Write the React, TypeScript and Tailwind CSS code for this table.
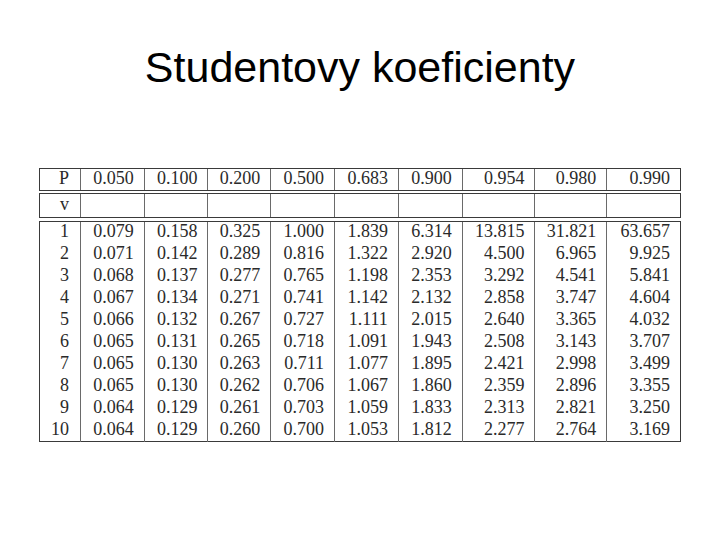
import React from 'react';

const cols = ['w-[40px]', 'w-[64px]', 'w-[64px]', 'w-[63px]', 'w-[64px]', 'w-[64px]', 'w-[64px]', 'w-[73px]', 'w-[72px]', 'w-[74px]'];

const probs = ['0.050', '0.100', '0.200', '0.500', '0.683', '0.900', '0.954', '0.980', '0.990'];

const rows: string[][] = [
  ['1', '0.079', '0.158', '0.325', '1.000', '1.839', '6.314', '13.815', '31.821', '63.657'],
  ['2', '0.071', '0.142', '0.289', '0.816', '1.322', '2.920', '4.500', '6.965', '9.925'],
  ['3', '0.068', '0.137', '0.277', '0.765', '1.198', '2.353', '3.292', '4.541', '5.841'],
  ['4', '0.067', '0.134', '0.271', '0.741', '1.142', '2.132', '2.858', '3.747', '4.604'],
  ['5', '0.066', '0.132', '0.267', '0.727', '1.111', '2.015', '2.640', '3.365', '4.032'],
  ['6', '0.065', '0.131', '0.265', '0.718', '1.091', '1.943', '2.508', '3.143', '3.707'],
  ['7', '0.065', '0.130', '0.263', '0.711', '1.077', '1.895', '2.421', '2.998', '3.499'],
  ['8', '0.065', '0.130', '0.262', '0.706', '1.067', '1.860', '2.359', '2.896', '3.355'],
  ['9', '0.064', '0.129', '0.261', '0.703', '1.059', '1.833', '2.313', '2.821', '3.250'],
  ['10', '0.064', '0.129', '0.260', '0.700', '1.053', '1.812', '2.277', '2.764', '3.169'],
];

// jeden řádek tabulky, svislé čáry mezi sloupci
const Row: React.FC<{ cells: string[]; h: string; pb: string }> = ({ cells, h, pb }) => (
  <div className="flex">
    {cells.map((c, i) => (
      <div
        key={i}
        className={`${cols[i]} ${h} ${pb} flex items-center justify-end ${i === 0 ? 'pr-[11px]' : 'pr-[10px] border-l border-[#6a6a6a]'}`}
      >
        {c}
      </div>
    ))}
  </div>
);

export default function App() {
  return (
    <div className="w-[720px] h-[540px] bg-white" style={{ fontFamily: '"Liberation Serif", serif' }}>
      <h1
        className="pt-[41px] h-[100px] text-center text-[43px] leading-[52px] text-black"
        style={{ fontFamily: '"Liberation Sans", Arial, sans-serif' }}
      >
        Studentovy koeficienty
      </h1>

      <div className="ml-[39px] mt-[68px] w-[642px] text-[18px] leading-[20px] text-[#2a2a2a]">
        {/* hlavička P */}
        <div className="border border-[#3a3a3a] h-[23px]">
          <Row cells={['P', ...probs]} h="h-[21px]" pb="pb-[3px]" />
        </div>

        {/* řádek v */}
        <div className="mt-[2px] border border-[#3a3a3a] h-[25px]">
          <Row cells={['v', '', '', '', '', '', '', '', '', '']} h="h-[23px]" pb="pb-[4px]" />
        </div>

        {/* data */}
        <div className="mt-[3px] border border-[#3a3a3a] h-[221px]">
          {rows.map((r, i) => (
            <Row key={i} cells={r} h="h-[22px]" pb="pb-[5px]" />
          ))}
        </div>
      </div>
    </div>
  );
}
